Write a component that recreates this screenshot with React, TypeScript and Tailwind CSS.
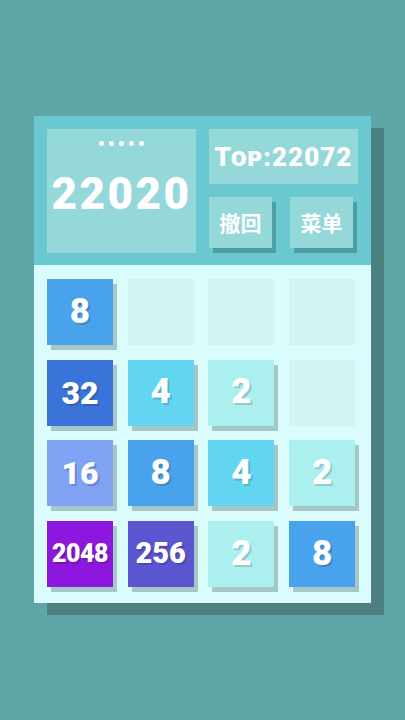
import React from 'react'

type Cell = number | null

const board: Cell[] = [
  8, null, null, null,
  32, 4, 2, null,
  16, 8, 4, 2,
  2048, 256, 2, 8,
]

const tileColor: Record<number, string> = {
  2: 'bg-[#abf0ef]',
  4: 'bg-[#62d6f0]',
  8: 'bg-[#49a3ec]',
  16: 'bg-[#7fa2f3]',
  32: 'bg-[#3a74d9]',
  256: 'bg-[#5b55cf]',
  2048: 'bg-[#8e17de]',
}

function tileText(n: number) {
  const len = String(n).length
  if (len === 1) return 'text-[35px]'
  if (len === 2) return 'text-[32px]'
  if (len === 3) return 'text-[29px]'
  return 'text-[25px] tracking-[-0.5px]'
}

function Tile({ value }: { value: Cell }) {
  if (value === null) {
    return <div className="h-[66px] w-[66px] bg-[#d4f4f3]" />
  }
  return (
    <div
      className={`flex h-[66px] w-[66px] items-center justify-center font-black text-white shadow-[4px_5px_0_#a7c6c6] [text-shadow:2px_2px_0_rgba(0,0,0,0.18)] ${tileColor[value]} ${tileText(value)}`}
    >
      {value}
    </div>
  )
}

export default function App() {
  return (
    <div
      className="min-h-[720px] w-full bg-[#5fa5a5] pt-[116px] pl-[34px]"
      style={{ fontFamily: 'Roboto, "Liberation Sans", "Noto Sans CJK SC", sans-serif' }}
    >
      <div className="w-[337px] shadow-[13px_12px_0_#4b7f80]">
        {/* header */}
        <div className="flex h-[149px] gap-[13px] bg-[#6ac8d0] pt-[13px] pl-[13px]">
          <div className="flex h-[124px] w-[149px] flex-col items-center bg-[#95d8da]">
            <div className="mt-[12px] flex gap-[5px]">
              {[0, 1, 2, 3, 4].map((i) => (
                <span key={i} className="h-[5px] w-[5px] rounded-full bg-white" />
              ))}
            </div>
            <div className="mt-[26px] text-[44px] leading-none font-black tracking-[2.5px] text-white">
              22020
            </div>
          </div>
          <div className="flex w-[149px] flex-col gap-[13px]">
            <div className="flex h-[55px] items-center justify-center bg-[#95d8da] text-[26px] leading-none font-black tracking-[1px] text-white [font-variant:small-caps]">
              Top:22072
            </div>
            <div className="flex gap-[18px]">
              {['撤回', '菜单'].map((t) => (
                <div
                  key={t}
                  className="flex h-[51px] w-[63px] items-center justify-center bg-[#95d8da] text-[21px] font-bold text-white shadow-[4px_5px_0_#4e9ea4]"
                  style={{ fontFamily: '"Noto Sans CJK SC", sans-serif' }}
                >
                  {t}
                </div>
              ))}
            </div>
          </div>
        </div>
        {/* board */}
        <div className="grid grid-cols-[repeat(4,66px)] gap-[14.7px] bg-[#dafcfc] pt-[14px] pr-[16px] pb-[16px] pl-[13px]">
          {board.map((v, i) => (
            <Tile key={i} value={v} />
          ))}
        </div>
      </div>
    </div>
  )
}
